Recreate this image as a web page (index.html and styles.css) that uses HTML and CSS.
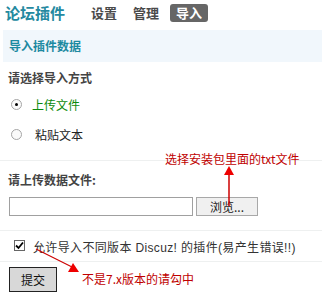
FILE: index.html
```html
<!DOCTYPE html>
<html>
<head>
<meta charset="utf-8">
<link rel="stylesheet" href="styles.css">
</head>
<body>
<div class="page">
  <div class="header">
    <span class="title">论坛插件</span>
    <nav class="nav">
      <span class="nav-item">设置</span>
      <span class="nav-item">管理</span>
      <span class="nav-item active">导入</span>
    </nav>
  </div>
  <div class="band">导入插件数据</div>
  <div class="section">
    <div class="label">请选择导入方式</div>
    <div class="radio-row first"><span class="radio checked"></span><span class="opt green">上传文件</span></div>
    <div class="radio-row second"><span class="radio"></span><span class="opt">粘贴文本</span></div>
  </div>
  <div class="section upload">
    <div class="label">请上传数据文件:</div>
    <div class="file-row"><span class="file-input"></span><span class="browse">浏览...</span></div>
  </div>
  <div class="check-row"><span class="checkbox"><svg width="9" height="9" viewBox="0 0 9 9"><path d="M1 4.5 L3.5 7 L8 1.5" fill="none" stroke="#000" stroke-width="1.8"/></svg></span><span class="check-text">允许导入不同版本 Discuz! 的插件(易产生错误!!)</span></div>
  <div class="submit-row"><span class="submit">提交</span></div>

  <div class="note note1">选择安装包里面的txt文件</div>
  <div class="note note2">不是7.x版本的请勾中</div>
  <svg class="arrows" width="322" height="295" viewBox="0 0 322 295">
    <line x1="229" y1="206" x2="229" y2="174" stroke="#c00" stroke-width="1.5"/>
    <polygon points="229,166 224,175 234,175" fill="#e00"/>
    <line x1="36" y1="249" x2="72" y2="267" stroke="#c00" stroke-width="1.2"/>
    <polygon points="79,272 68,272 73,263" fill="#e00"/>
  </svg>
</div>
</body>
</html>
```
FILE: styles.css
```css
html, body { margin: 0; padding: 0; background: #fff; }
body { font-family: "Noto Sans CJK SC", "Liberation Sans", sans-serif; font-size: 12px; color: #222; }
.page { position: relative; width: 322px; height: 295px; overflow: hidden; }
.header { height: 30px; display: flex; align-items: center; padding-left: 5px; box-sizing: border-box; padding-bottom: 4px; }
.title { font-size: 15px; font-weight: bold; color: #2489a0; line-height: 18px; }
.nav { display: flex; align-items: center; margin-left: 26px; gap: 16px; }
.nav-item { font-size: 13px; font-weight: bold; color: #4a4a4a; line-height: 16px; }
.nav-item.active { background: #666; color: #fff; border-radius: 3px; padding: 1px 6px; margin-left: -5px; }
.band { margin-left: 3px; height: 32px; background: #f1f7fc; color: #1d8aa1; font-weight: bold; line-height: 32px; padding-left: 6px; font-size: 12px; }
.section { padding-left: 8px; border-bottom: 1px solid #eef0f0; }
.section .label { font-weight: bold; color: #444; padding-top: 8px; line-height: 16px; }
.radio-row { display: flex; align-items: center; height: 30px; padding-left: 3px; }
.radio-row.first { margin-top: 3px; }
.radio-row.second { padding-bottom: 11px; }
.radio { width: 11px; height: 11px; border: 1px solid #a5a5a5; border-radius: 50%; box-sizing: border-box; position: relative; background: #fafafa; }
.radio.checked::after { content: ""; position: absolute; left: 3px; top: 3px; width: 3px; height: 3px; border-radius: 50%; background: #000; }
.opt { margin-left: 10px; color: #222; }
.second .opt { margin-left: 13px; }
.green { color: #0c8a0c; }
.upload { padding-bottom: 14px; }
.upload .label { padding-top: 11px; }
.file-row { display: flex; margin-top: 9px; margin-left: 1px; gap: 3px; }
.file-input { width: 184px; height: 19px; border: 1px solid #a0a0a0; box-sizing: border-box; background: #fff; }
.browse { width: 62px; height: 19px; border: 1px solid #a8a8a8; box-sizing: border-box; background: #f0f0f0; text-align: center; line-height: 17px; color: #222; }
.check-row { display: flex; align-items: center; height: 30px; padding-left: 14px; border-bottom: 1px solid #eef0f0; }
.checkbox { width: 11px; height: 11px; border: 1px solid #666; box-sizing: border-box; display: flex; align-items: center; justify-content: center; background: #fff; margin-top: -2px; }
.check-text { margin-left: 8px; color: #333; font-size: 12px; letter-spacing: 0.35px; font-family: "Liberation Sans", "Noto Sans CJK SC", sans-serif; }
.submit-row { padding: 5px 0 0 9px; }
.submit { display: inline-block; width: 48px; height: 25px; border: 1px solid #222; box-sizing: border-box; background: #d8d8d8; text-align: center; line-height: 23px; color: #111; font-size: 12px; }
.note { position: absolute; color: #c00000; font-size: 12px; line-height: 14px; }
.note1 { left: 165px; top: 152px; }
.note2 { left: 82px; top: 272px; }
.arrows { position: absolute; left: 0; top: 0; pointer-events: none; }
```
